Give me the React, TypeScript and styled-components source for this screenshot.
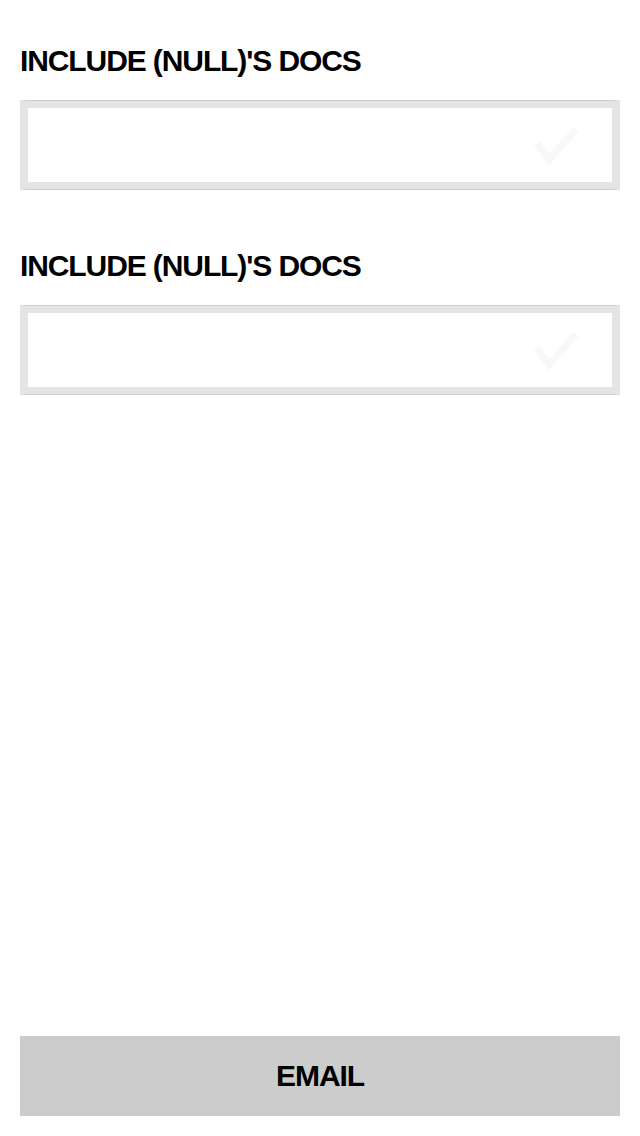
import React from 'react';
import styled, { createGlobalStyle } from 'styled-components';

const GlobalStyle = createGlobalStyle`
  html, body {
    margin: 0;
    padding: 0;
    background: #ffffff;
  }
  body {
    font-family: "Liberation Sans", Arial, sans-serif;
  }
`;

const Page = styled.div`
  display: flex;
  flex-direction: column;
  min-height: 100vh;
  box-sizing: border-box;
  padding: 43px 20px 20px;
`;

const Section = styled.section`
  display: flex;
  flex-direction: column;
  margin-bottom: 58px;
`;

const Title = styled.h2`
  margin: 0 0 21px;
  font-size: 30px;
  line-height: 36px;
  font-weight: 700;
  letter-spacing: -1.1px;
  color: #000;
  text-transform: uppercase;
`;

// white input well inside a light grey frame, hairlines top and bottom
const Field = styled.div`
  display: flex;
  align-items: center;
  justify-content: flex-end;
  height: 90px;
  box-sizing: border-box;
  padding-right: 33px;
  background: #fff;
  border: 8px solid #e4e4e4;
  border-top: 1px solid #cccccc;
  border-bottom: 1px solid #cccccc;
  box-shadow: inset 0 7px 0 #e4e4e4, inset 0 -7px 0 #e4e4e4;
`;

const Check = styled.svg`
  width: 46px;
  height: 42px;
  display: block;
`;

const EmailButton = styled.button`
  margin-top: auto;
  height: 80px;
  width: 100%;
  border: none;
  background: #cccccc;
  color: #000;
  font-family: "Liberation Sans", Arial, sans-serif;
  font-size: 30px;
  font-weight: 700;
  letter-spacing: -1.1px;
  text-transform: uppercase;
  cursor: pointer;
`;

const CheckField: React.FC = () => (
  <Field>
    <Check viewBox="0 0 46 42">
      <path d="M4 19 L16 36 L43 5" fill="none" stroke="#f8f8f8" strokeWidth="7" />
    </Check>
  </Field>
);

const App: React.FC = () => {
  const options = ["Include (null)'s docs", "Include (null)'s docs"];

  return (
    <>
      <GlobalStyle />
      <Page>
        {options.map((label, index) => (
          <Section key={index}>
            <Title>{label}</Title>
            <CheckField />
          </Section>
        ))}
        <EmailButton>Email</EmailButton>
      </Page>
    </>
  );
};

export default App;
